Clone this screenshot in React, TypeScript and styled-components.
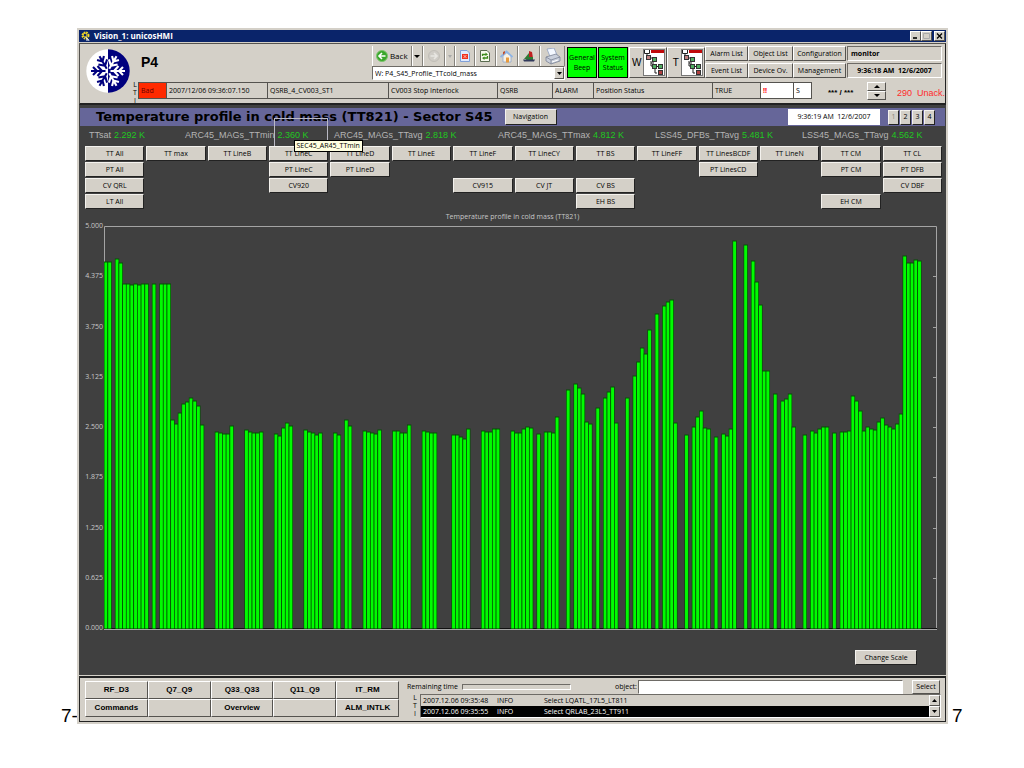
import React from "react";
import styled, { createGlobalStyle, css } from "styled-components";

const face = "#d4d0c8";
const small = '"Open Sans", "Liberation Sans", sans-serif';
const arial = '"Liberation Sans", Arial, sans-serif';

const GlobalStyle = createGlobalStyle`
  *, *::before, *::after { box-sizing: border-box; }
  body { margin: 0; background: #fff; color: #000; font: 7px/9px ${small}; }
  button, input, select { font: inherit; color: inherit; margin: 0; border-radius: 0; }
  svg { display: block; flex: none; }
`;

const raised = css`
  border: 1px solid;
  border-color: #fff #55534f #55534f #fff;
`;
const sunken = css`
  border: 1px solid;
  border-color: #6e6b66 #fff #fff #6e6b66;
`;

const Page = styled.div`
  display: flex;
  align-items: flex-end;
  padding: 28px 60px 0 61px;
`;
const Footnote = styled.span<{ $side: "left" | "right" }>`
  flex: none;
  width: 16px;
  padding-left: ${(p) => (p.$side === "left" ? 0 : 4)}px;
  font: 19px/16px ${arial};
`;
const Window = styled.main`
  flex: 1;
  min-width: 0;
  border: 2px solid ${face};
  background: ${face};
`;

const TitleBar = styled.header`
  display: flex;
  align-items: center;
  gap: 4px;
  height: 12px;
  margin-bottom: 1px;
  padding: 0 1px 0 2px;
  background: #0a246a;
  color: #fff;
  h1 { flex: 1; margin: 0; font: bold 8px/12px ${small}; }
`;
const WindowButtons = styled.div`
  display: flex;
  button:last-child { margin-left: 2px; }
`;
const WindowButton = styled.button`
  ${raised}
  display: grid;
  place-items: center;
  width: 11px;
  height: 10px;
  padding: 0;
  background: ${face};
`;

const Header = styled.section`
  display: flex;
  height: 62px;
  border: 1px solid #55534f;
  border-bottom: 2px solid #222;
  border-right-color: #222;
`;
const LogoBox = styled.div`
  flex: none;
  padding: 5px 2px 0 6px;
`;
const HeaderMain = styled.div`
  flex: 1;
  min-width: 0;
`;
const TopRow = styled.div`
  display: flex;
  align-items: flex-start;
  height: 37px;
  padding: 2px 3px 0 9px;
`;
const PlantName = styled.h2`
  flex: 1;
  margin: 0;
  padding-top: 7px;
  font: bold 14px/18px ${arial};
`;
const NavBox = styled.div`
  width: 193px;
  margin-right: 2px;
`;
const Tools = styled.div`
  display: flex;
  height: 20px;
`;
const ToolButton = styled.button<{ $w: number }>`
  display: flex;
  align-items: center;
  justify-content: center;
  gap: 2px;
  flex: ${(p) => p.$w} 1 0;
  padding: 0;
  border: 0;
  border-left: 1px solid #fff;
  border-right: 1px solid #85827c;
  background: ${face};
  font: 8px/10px ${small};
`;
const Combo = styled.div`
  ${sunken}
  display: flex;
  height: 14px;
  background: #fff;
  select {
    flex: 1;
    min-width: 0;
    padding: 0 2px;
    border: 0;
    outline: 0;
    appearance: none;
    background: #fff;
  }
`;
const Arrow = styled.span`
  ${raised}
  display: grid;
  place-items: center;
  width: 10px;
  background: ${face};
`;
const StatusButton = styled.button`
  width: 30px;
  height: 31px;
  margin: 1px 1px 0 0;
  padding: 0;
  border: 1px solid #000;
  background: #00ff00;
  line-height: 10px;
`;
const TreeButton = styled.button`
  ${raised}
  display: flex;
  align-items: center;
  justify-content: space-between;
  width: 38px;
  height: 31px;
  margin-top: 1px;
  padding: 0 1px 0 2px;
  background: ${face};
  font: 10px/12px ${arial};
`;
const MenuGrid = styled.div`
  display: grid;
  grid-template-columns: 43px 45px 53px;
  grid-auto-rows: 15px;
  row-gap: 2px;
  margin-right: 1px;
`;
const MenuButton = styled.button`
  ${raised}
  padding: 0;
  background: ${face};
  white-space: nowrap;
`;
const Fields = styled.div`
  display: grid;
  grid-template-columns: 95px;
  grid-auto-rows: 15px;
  row-gap: 2px;
`;
const Field = styled.div<{ $center?: boolean }>`
  ${sunken}
  padding: 0 3px;
  font-weight: bold;
  line-height: 13px;
  text-align: ${(p) => (p.$center ? "center" : "left")};
  white-space: pre;
`;

const AlarmRow = styled.div`
  display: flex;
  align-items: flex-start;
`;
const Levels = styled.div`
  display: flex;
  flex-direction: column;
  flex: none;
  width: 6px;
  line-height: 8px;
  text-align: center;
`;
const AlarmTable = styled.table`
  flex: 1 1 0;
  height: 17px;
  border-collapse: collapse;
  table-layout: fixed;
  margin-top: 1px;
`;
const AlarmCell = styled.td<{ $bg?: string; $color?: string; $bold?: boolean }>`
  padding: 0 2px;
  border: 1px solid #55534f;
  background: ${(p) => p.$bg ?? "transparent"};
  color: ${(p) => p.$color ?? "#000"};
  font-weight: ${(p) => (p.$bold ? "bold" : "normal")};
  white-space: nowrap;
`;
const AlarmTail = styled.div`
  display: flex;
  align-items: center;
  width: 133px;
  height: 20px;
  padding-left: 16px;
`;
const Counter = styled.span`
  flex: 1;
  padding-top: 3px;
  font: bold 8px/10px ${arial};
`;
const Spinner = styled.div`
  display: grid;
  grid-auto-rows: 9px;
  width: 19px;
  margin-right: 11px;
  button { ${raised} display: grid; place-items: center; padding: 0; background: ${face}; }
`;
const Unack = styled.span`
  width: 48px;
  padding-top: 3px;
  color: #ff2a2a;
  font: 9px/12px ${arial};
  white-space: pre;
`;

const Screen = styled.section`
  padding: 3px 0 10px;
  background: #404040;
`;
const Banner = styled.div`
  display: flex;
  align-items: center;
  height: 18px;
  margin: 0 1px;
  padding: 0 10px 0 16px;
  background: #666699;
  h2 { margin: 0 12px 0 0; font: bold 13px/18px "DejaVu Sans", Verdana, sans-serif; white-space: nowrap; }
`;
const FaceButton = styled.button<{ $w?: number; $h?: number }>`
  border: 1px solid;
  border-color: #f4f2ee #222 #222 #f4f2ee;
  width: ${(p) => (p.$w ? `${p.$w}px` : "100%")};
  height: ${(p) => p.$h ?? 15}px;
  padding: 0;
  background: ${face};
  line-height: 12px;
  white-space: nowrap;
  &:disabled { color: #8a8780; }
`;
const Clock = styled.time`
  width: 92px;
  height: 16px;
  margin: 0 8px 0 auto;
  background: #fff;
  line-height: 16px;
  text-align: center;
  white-space: pre;
`;
const PageButtons = styled.div`
  display: flex;
  gap: 1px;
`;
const Readings = styled.dl`
  display: grid;
  grid-template-columns: 96fr 149fr 164fr 157fr 147fr 144fr;
  height: 20px;
  margin: 0;
  padding-left: 10px;
  font: 9px/18px ${arial};
  div { display: flex; gap: 3px; }
  dt { color: #b4b4b4; }
  dd { margin: 0; color: #1fc81f; position: relative; white-space: nowrap; }
`;
const Outline = styled.span`
  position: absolute;
  z-index: 1;
  left: -4px;
  top: -8px;
  width: 54px;
  height: 28px;
  border: 1px solid #b9b9c4;
  border-bottom: 0;
`;
const Tooltip = styled.span`
  position: absolute;
  z-index: 2;
  left: 16px;
  top: 14px;
  padding: 0 2px;
  border: 1px solid #000;
  background: #ffffe1;
  color: #000;
  font: 7px/10px ${small};
`;
const ButtonGrid = styled.div`
  display: grid;
  grid-template-columns: repeat(14, 1fr);
  grid-auto-rows: 15px;
  gap: 1px 2px;
  padding: 0 4px 0 6px;
`;
const Cell = styled.div<{ $col: number; $row: number }>`
  grid-column: ${(p) => p.$col};
  grid-row: ${(p) => p.$row};
`;
const ChartTitle = styled.h3`
  margin: 2px 0 0;
  color: #c8c8c8;
  font: 7px/11px ${small};
  text-align: center;
`;
const ChartRow = styled.div`
  display: flex;
  padding-right: 9px;
`;
const Scale = styled.div`
  display: flex;
  flex-direction: column;
  justify-content: space-between;
  width: 25px;
  height: 410px;
  color: #c8c8c8;
  line-height: 8px;
  text-align: right;
  padding-right: 1px;
`;
const Plot = styled.svg`
  flex: 1;
  min-width: 0;
  height: 404px;
  margin-top: 4px;
`;
const ScaleAction = styled.div`
  display: flex;
  justify-content: flex-end;
  padding: 18px 29px 0 0;
`;

const Footer = styled.footer`
  display: flex;
  align-items: flex-start;
  height: 46px;
  margin-top: 1px;
  padding: 3px 4px 0 5px;
  border: 1px solid #222;
  border-top-width: 2px;
`;
const FooterNav = styled.nav`
  display: grid;
  grid-template-columns: repeat(5, 1fr);
  grid-auto-rows: 18px;
  flex: 314 1 0;
  button { ${raised} padding: 0; background: ${face}; font: bold 8px/12px ${arial}; }
`;
const Console = styled.div`
  flex: 534 1 0;
  min-width: 0;
  padding-left: 8px;
  margin-top: -2px;
`;
const ConsoleTop = styled.div`
  display: flex;
  align-items: center;
  height: 15px;
  label { margin-left: 44px; margin-right: 1px; }
`;
const Progress = styled.div`
  ${sunken}
  width: 109px;
  height: 6px;
  margin-left: 4px;
`;
const ObjectInput = styled.input`
  ${sunken}
  flex: 1;
  min-width: 0;
  height: 14px;
  padding: 0 2px;
  margin-right: 9px;
  background: #fff;
`;
const SelectButton = styled.button`
  ${raised}
  width: 28px;
  height: 14px;
  margin-right: 1px;
  padding: 0;
  background: ${face};
`;
const LogRow = styled.div`
  display: flex;
  padding-left: 5px;
`;
const LogBox = styled.div`
  ${sunken}
  display: flex;
  flex: 1;
  margin-left: 2px;
  height: 24px;
`;
const LogTable = styled.table`
  flex: 1;
  border-collapse: collapse;
  table-layout: fixed;
  td { height: 11px; padding: 0 2px; line-height: 9px; white-space: nowrap; }
`;
const LogEntry = styled.tr<{ $selected?: boolean }>`
  background: ${(p) => (p.$selected ? "#000" : face)};
  color: ${(p) => (p.$selected ? "#fff" : "#000")};
`;
const ScrollButtons = styled.div`
  display: grid;
  grid-template-rows: 11px 11px;
  width: 11px;
  button { ${raised} display: grid; place-items: center; padding: 0; background: ${face}; }
`;

const Triangle = ({ up = false, w = 5, color = "#000" }: { up?: boolean; w?: number; color?: string }) => (
  <svg width={w} height="3" viewBox="0 0 6 3" preserveAspectRatio="none" aria-hidden>
    <path d={up ? "M0 3L3 0L6 3Z" : "M0 0L3 3L6 0Z"} fill={color} />
  </svg>
);

const Flake = ({ color }: { color: string }) => (
  <g stroke={color} strokeWidth="2.1" fill="none">
    {[0, 60, 120, 180, 240, 300].map((a) => (
      <path key={a} transform={`rotate(${a})`} d="M2.500 0H17M6 0L10.500 -5M6 0L10.500 5M11 0L15 -4M11 0L15 4" />
    ))}
  </g>
);

const Logo = () => (
  <svg width="44" height="44" viewBox="-22 -22 44 44" role="img" aria-label="Cryogenics">
    <defs>
      <clipPath id="west"><rect x="-22" y="-22" width="22" height="44" /></clipPath>
      <clipPath id="east"><rect x="0" y="-22" width="22" height="44" /></clipPath>
    </defs>
    <g clipPath="url(#west)"><circle r="21.700" fill="#fff" /><Flake color="#00007e" /></g>
    <g clipPath="url(#east)"><circle r="21.700" fill="#00007e" /><Flake color="#fff" /></g>
  </svg>
);

const TreeIcon = () => (
  <svg width="22" height="27" viewBox="0 0 22 27" aria-hidden>
    <rect x=".5" y=".5" width="21" height="26" fill="#fff" stroke="#777" />
    <rect x="8" y="1" width="13" height="3" fill="#c00a0a" />
    <path d="M1.500 1V4.500H6.500V1M4 5V8M8 12V17H10M8 14H11M12 19V24H14" fill="none" stroke="#222" />
    <g stroke="#333">
      <rect x="3.500" y="6.500" width="4" height="4" fill="#c08080" />
      <rect x="9.500" y="8.500" width="4" height="4" fill="#4fae60" />
      <rect x="9.500" y="15.500" width="4" height="4" fill="#4fae60" />
      <rect x="15.500" y="15.500" width="4" height="4" fill="#4fae60" />
      <rect x="15.500" y="21.500" width="4" height="4" fill="#b04040" />
    </g>
    <path d="M7.500 9H9.500M13.500 17.500H15.500" stroke="#222" />
  </svg>
);

const BackIcon = () => (
  <svg width="12" height="12" viewBox="0 0 12 12" aria-hidden>
    <circle cx="6" cy="6" r="5.500" fill="#3aa62c" stroke="#7cc46c" />
    <path d="M6 3L3 6L6 9M3.500 6H9.500" fill="none" stroke="#fff" strokeWidth="1.6" />
  </svg>
);
const ForwardIcon = () => (
  <svg width="12" height="12" viewBox="0 0 12 12" aria-hidden>
    <circle cx="6" cy="6" r="5.500" fill="#cfccc6" stroke="#c0bdb7" />
    <path d="M6 3L9 6L6 9M8.500 6H2.500" fill="none" stroke="#e8e6e2" strokeWidth="1.6" />
  </svg>
);
const StopIcon = () => (
  <svg width="10" height="12" viewBox="0 0 10 12" aria-hidden>
    <path d="M.5.5H7L9.500 3V11.500H.5Z" fill="#dfeaff" stroke="#7f9fd8" />
    <rect x="2" y="4" width="6" height="5" fill="#f03020" />
    <path d="M3.500 5L6.500 8M6.500 5L3.500 8" stroke="#ffd8d0" strokeWidth=".8" />
  </svg>
);
const RefreshIcon = () => (
  <svg width="10" height="12" viewBox="0 0 10 12" aria-hidden>
    <path d="M.5.5H7L9.500 3V11.500H.5Z" fill="#f7faee" stroke="#5a6b50" />
    <path d="M2.500 6V4.500H6M7.500 6V8H4" fill="none" stroke="#3c8c1c" strokeWidth="1.3" />
    <path d="M5.500 2.500L8 4.500L5.500 6Z M4.500 6.500L2 8L4.500 10Z" fill="#3c8c1c" />
  </svg>
);
const HomeIcon = () => (
  <svg width="13" height="13" viewBox="0 0 13 13" aria-hidden>
    <path d="M3 6V12H11V6L7 2.500Z" fill="#f6f1e6" stroke="#8fa6cc" strokeWidth=".8" />
    <path d="M.5 7L6.500 1.500L12.500 7" fill="none" stroke="#8db4e6" strokeWidth="1.8" />
    <path d="M3 2V5L5 3V1Z" fill="#c05030" />
    <rect x="6" y="7.500" width="3" height="5" fill="#e89a3c" />
  </svg>
);
const BoatIcon = () => (
  <svg width="12" height="11" viewBox="0 0 12 11" aria-hidden>
    <path d="M6 0L9 1L10 7H6Z" fill="#c02020" />
    <path d="M6 2V8H1Z" fill="#2f7a34" />
    <path d="M4 6H10V9H3Z" fill="#2f7a34" />
    <path d="M0 8.500H12L11 10.500H1Z" fill="#333a5c" />
  </svg>
);
const PrinterIcon = () => (
  <svg width="16" height="17" viewBox="0 0 16 17" aria-hidden>
    <path d="M2 1L9 0L12 7L5 8.500Z" fill="#f4f8ff" stroke="#8fa0bf" strokeWidth=".8" />
    <path d="M1 9L11 6L15 9V13L6 16L1 13Z" fill="#c9cfdb" stroke="#7c8496" strokeWidth=".8" />
    <path d="M1 9L6 12L15 9M6 12V16" fill="none" stroke="#7c8496" strokeWidth=".8" />
    <path d="M7 14L13 12" stroke="#fff" />
  </svg>
);
const GearIcon = () => (
  <svg width="9" height="10" viewBox="0 0 9 10" aria-hidden>
    <circle cx="4.500" cy="4.500" r="3" fill="none" stroke="#f2d824" strokeWidth="2" strokeDasharray="1.6 .8" />
    <circle cx="4" cy="4" r="2" fill="none" stroke="#f2d824" />
    <path d="M4.500 6L8 9.500M5 9H8" stroke="#fff" />
  </svg>
);

// Bar heights on a scale where 402 counts is 5.000 K, as [first sensor slot, consecutive heights].
const FULL = 402;
const SLOTS = 225;
const PLOT_W = 833;
const runs: [number, number[]][] = [
  [0, [366, 366]],
  [3, [369, 365, 344, 344, 343, 344, 343, 344, 344]],
  [13, [344]],
  [15, [344, 344, 344, 208, 204, 215, 224, 226, 230, 227, 222, 203]],
  [30, [196, 195, 194, 194, 202]],
  [38, [198, 196, 195, 195, 196]],
  [46, [194, 192, 200, 205, 202]],
  [54, [198, 196, 195, 193, 195]],
  [62, [195, 193]],
  [65, [208, 202]],
  [70, [197, 196, 195, 194, 198]],
  [78, [197, 197, 195, 195, 203]],
  [86, [197, 196, 195, 195]],
  [94, [193, 193, 191, 189, 199]],
  [102, [197, 196, 196, 199, 199]],
  [110, [197, 195, 195, 199, 201, 200]],
  [117, [194]],
  [119, [196, 196, 195, 211]],
  [125, [238]],
  [127, [244, 240, 234, 206, 204]],
  [133, [220]],
  [135, [230, 236, 241, 205]],
  [141, [230]],
  [143, [252, 266, 280, 274, 298]],
  [149, [314]],
  [151, [322, 326, 328, 205]],
  [157, [193]],
  [159, [201, 211, 217, 200, 199]],
  [165, [191]],
  [167, [194, 192, 199, 387]],
  [173, [383]],
  [175, [367, 346, 323, 257, 257]],
  [181, [234]],
  [183, [227, 229, 234, 201]],
  [189, [193]],
  [191, [197, 195, 199, 201, 201]],
  [197, [195]],
  [199, [196, 196, 197, 232, 227, 217, 197, 201, 199, 198, 206, 210, 203, 201, 199, 204, 214, 372, 365, 365, 368, 367]],
];
const bars = runs.flatMap(([start, hs]) => hs.map((h, k) => ({ slot: start + k, h })));
const pitch = (PLOT_W - 1) / SLOTS;

const TemperatureBars = () => (
  <Plot viewBox={`0 0 ${PLOT_W} 404`} preserveAspectRatio="none" role="img" aria-label="Temperature profile in cold mass">
    <path d={`M.5 403V.5H${PLOT_W - 0.5}V403`} fill="none" stroke="#a4a4a4" />
    {[1, 2, 3, 4, 5, 6, 7].map((t) => (
      <path key={t} d={`M${PLOT_W - 4} ${Math.round((t * FULL) / 8) + 0.5}h3`} stroke="#a4a4a4" />
    ))}
    <path d={`M0 402.500H${PLOT_W}`} stroke="#111" />
    {bars.map(({ slot, h }) => (
      <g key={slot}>
        <rect x={slot * pitch - 0.2} y={FULL - h - 0.5} width="4.300" height={h + 1} fill="#045004" />
        <rect x={slot * pitch + 0.5} y={FULL - h + 0.5} width="2.900" height={h} fill="#00fc00" />
      </g>
    ))}
    <path d={`M0 403.500H${PLOT_W}`} stroke="#a4a4a4" />
  </Plot>
);

const menu = ["Alarm List", "Object List", "Configuration", "Event List", "Device Ov.", "Management"];

const alarm: { w: number; text: string; bg?: string; color?: string; bold?: boolean }[] = [
  { w: 28, text: "Bad", bg: "#ff2a00", color: "#600" },
  { w: 101, text: "2007/12/06 09:36:07.150" },
  { w: 121, text: "QSRB_4_CV003_ST1" },
  { w: 109, text: "CV003 Stop Interlock" },
  { w: 55, text: "QSRB" },
  { w: 41, text: "ALARM" },
  { w: 119, text: "Position Status" },
  { w: 48, text: "TRUE" },
  { w: 33, text: "!!", bg: "#fff", color: "#f00", bold: true },
  { w: 18, text: "S", bg: "#fff" },
];

const readings: [string, string][] = [
  ["TTsat", "2.292 K"],
  ["ARC45_MAGs_TTmin", "2.360 K"],
  ["ARC45_MAGs_TTavg", "2.818 K"],
  ["ARC45_MAGs_TTmax", "4.812 K"],
  ["LSS45_DFBs_TTavg", "5.481 K"],
  ["LSS45_MAGs_TTavg", "4.562 K"],
];

const groups: [number, string[]][] = [
  [1, ["TT All", "TT max", "TT LineB", "TT LineC", "TT LineD", "TT LineE", "TT LineF", "TT LineCY", "TT BS", "TT LineFF", "TT LinesBCDF", "TT LineN", "TT CM", "TT CL"]],
  [2, ["PT All", "", "", "PT LineC", "PT LineD", "", "", "", "", "", "PT LinesCD", "", "PT CM", "PT DFB"]],
  [3, ["CV QRL", "", "", "CV920", "", "", "CV915", "CV JT", "CV BS", "", "", "", "", "CV DBF"]],
  [4, ["LT All", "", "", "", "", "", "", "", "EH BS", "", "", "", "EH CM", ""]],
];

const scale = ["5.000", "4.375", "3.750", "3.125", "2.500", "1.875", "1.250", "0.625", "0.000"];
const shortcuts = ["RF_D3", "Q7_Q9", "Q33_Q33", "Q11_Q9", "IT_RM", "Commands", "", "Overview", "", "ALM_INTLK"];
const log = [
  ["2007.12.06 09:35:48", "INFO", "Select LQATL_17L5_LT811"],
  ["2007.12.06 09:35:55", "INFO", "Select QRLAB_23L5_TT911"],
];

export default function App() {
  return (
    <>
      <GlobalStyle />
      <Page>
        <Footnote $side="left">7-</Footnote>
        <Window>
          <TitleBar>
            <GearIcon />
            <h1>Vision_1: unicosHMI</h1>
            <WindowButtons>
              <WindowButton aria-label="Minimize">
                <svg width="7" height="6" viewBox="0 0 7 6"><path d="M1 5H5" stroke="#000" strokeWidth="1.6" /></svg>
              </WindowButton>
              <WindowButton aria-label="Maximize">
                <svg width="7" height="6" viewBox="0 0 7 6"><path d="M.5.5H6.500V5.500H.5Z" stroke="#aaa" fill="none" /></svg>
              </WindowButton>
              <WindowButton aria-label="Close">
                <svg width="7" height="6" viewBox="0 0 7 6"><path d="M1 .5L6 5.500M6 .5L1 5.500" stroke="#000" strokeWidth="1.3" /></svg>
              </WindowButton>
            </WindowButtons>
          </TitleBar>

          <Header>
            <LogoBox><Logo /></LogoBox>
            <HeaderMain>
              <TopRow>
                <PlantName>P4</PlantName>
                <NavBox>
                  <Tools>
                    <ToolButton $w={41}><BackIcon />Back</ToolButton>
                    <ToolButton $w={10} aria-label="Back history"><Triangle w={6} /></ToolButton>
                    <ToolButton $w={22} aria-label="Forward"><ForwardIcon /></ToolButton>
                    <ToolButton $w={9} aria-label="Forward history"><Triangle w={4} color="#aaa" /></ToolButton>
                    <ToolButton $w={19} aria-label="Stop"><StopIcon /></ToolButton>
                    <ToolButton $w={21} aria-label="Refresh"><RefreshIcon /></ToolButton>
                    <ToolButton $w={22} aria-label="Home"><HomeIcon /></ToolButton>
                    <ToolButton $w={22} aria-label="Trends"><BoatIcon /></ToolButton>
                    <ToolButton $w={25} aria-label="Print"><PrinterIcon /></ToolButton>
                  </Tools>
                  <Combo>
                    <select aria-label="Panel">
                      <option>W: P4_S45_Profile_TTcold_mass</option>
                    </select>
                    <Arrow><Triangle /></Arrow>
                  </Combo>
                </NavBox>
                <StatusButton>General Beep</StatusButton>
                <StatusButton>System Status</StatusButton>
                <TreeButton aria-label="W tree">W<TreeIcon /></TreeButton>
                <TreeButton aria-label="T tree"><span>&nbsp;T</span><TreeIcon /></TreeButton>
                <MenuGrid>
                  {menu.map((m) => <MenuButton key={m}>{m}</MenuButton>)}
                </MenuGrid>
                <Fields>
                  <Field>monitor</Field>
                  <Field $center>{"9:36:18 AM  12/6/2007"}</Field>
                </Fields>
              </TopRow>
              <AlarmRow>
                <Levels><span>L</span><span>T</span><span>I</span></Levels>
                <AlarmTable>
                  <colgroup>
                    {alarm.map((a) => <col key={a.text} style={{ width: `${(a.w / 673) * 100}%` }} />)}
                  </colgroup>
                  <tbody>
                    <tr>
                      {alarm.map((a) => (
                        <AlarmCell key={a.text} $bg={a.bg} $color={a.color} $bold={a.bold}>{a.text}</AlarmCell>
                      ))}
                    </tr>
                  </tbody>
                </AlarmTable>
                <AlarmTail>
                  <Counter>*** / ***</Counter>
                  <Spinner>
                    <button aria-label="Previous alarm"><Triangle up w={6} /></button>
                    <button aria-label="Next alarm"><Triangle w={6} /></button>
                  </Spinner>
                  <Unack>{"290  Unack."}</Unack>
                </AlarmTail>
              </AlarmRow>
            </HeaderMain>
          </Header>

          <Screen>
            <Banner>
              <h2>Temperature profile in cold mass (TT821) - Sector S45</h2>
              <FaceButton $w={52} $h={16}>Navigation</FaceButton>
              <Clock>{"9:36:19 AM  12/6/2007"}</Clock>
              <PageButtons>
                {[1, 2, 3, 4].map((n) => (
                  <FaceButton key={n} $w={11} disabled={n === 1}>{n}</FaceButton>
                ))}
              </PageButtons>
            </Banner>
            <Readings>
              {readings.map(([name, value]) => (
                <div key={name}>
                  <dt>{name}</dt>
                  <dd>
                    {value}
                    {name === "ARC45_MAGs_TTmin" && (
                      <>
                        <Outline />
                        <Tooltip role="tooltip">SEC45_AR45_TTmin</Tooltip>
                      </>
                    )}
                  </dd>
                </div>
              ))}
            </Readings>
            <ButtonGrid>
              {groups.flatMap(([row, names]) =>
                names.map((name, i) =>
                  name ? (
                    <Cell key={name} $col={i + 1} $row={row}>
                      <FaceButton>{name}</FaceButton>
                    </Cell>
                  ) : null
                )
              )}
            </ButtonGrid>
            <ChartTitle>Temperature profile in cold mass (TT821)</ChartTitle>
            <ChartRow>
              <Scale>{scale.map((s) => <span key={s}>{s}</span>)}</Scale>
              <TemperatureBars />
            </ChartRow>
            <ScaleAction><FaceButton $w={62}>Change Scale</FaceButton></ScaleAction>
          </Screen>

          <Footer>
            <FooterNav>
              {shortcuts.map((s, i) => <button key={i}>{s}</button>)}
            </FooterNav>
            <Console>
              <ConsoleTop>
                <span>Remaining time</span>
                <Progress />
                <label htmlFor="object">object:</label>
                <ObjectInput id="object" type="text" />
                <SelectButton>Select</SelectButton>
              </ConsoleTop>
              <LogRow>
                <Levels><span>L</span><span>T</span><span>I</span></Levels>
                <LogBox>
                  <LogTable>
                    <colgroup>
                      <col style={{ width: "74px" }} />
                      <col style={{ width: "47px" }} />
                      <col />
                    </colgroup>
                    <tbody>
                      {log.map(([at, level, text], i) => (
                        <LogEntry key={at} $selected={i === 1}>
                          <td>{at}</td>
                          <td>{level}</td>
                          <td>{text}</td>
                        </LogEntry>
                      ))}
                    </tbody>
                  </LogTable>
                  <ScrollButtons>
                    <button aria-label="Scroll up"><Triangle up /></button>
                    <button aria-label="Scroll down"><Triangle /></button>
                  </ScrollButtons>
                </LogBox>
              </LogRow>
            </Console>
          </Footer>
        </Window>
        <Footnote $side="right">7</Footnote>
      </Page>
    </>
  );
}
